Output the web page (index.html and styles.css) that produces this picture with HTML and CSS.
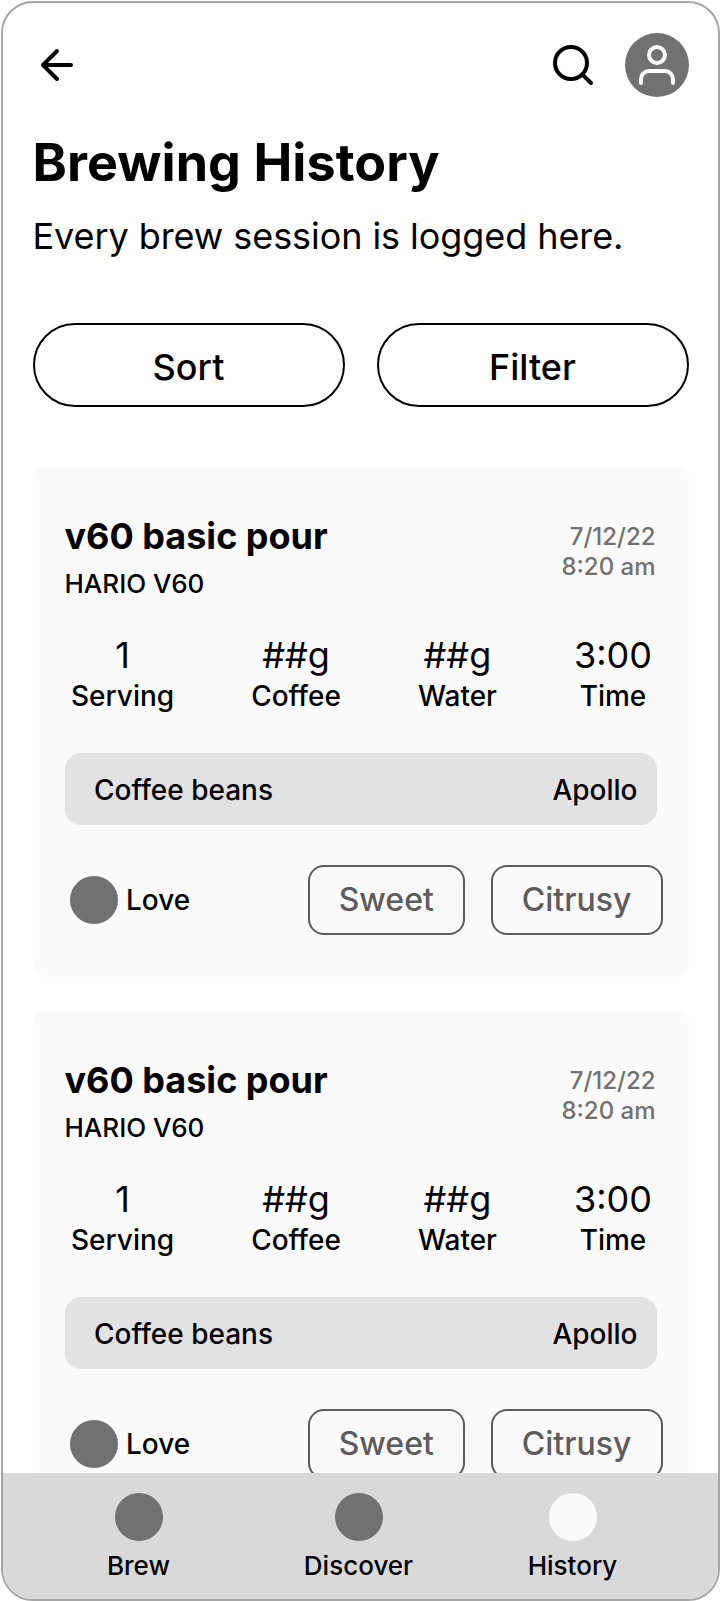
FILE: index.html
```html
<!DOCTYPE html>
<html lang="en">
<head>
<meta charset="UTF-8">
<meta name="viewport" content="width=device-width, initial-scale=1.0">
<title>Brewing History</title>
<link rel="stylesheet" href="styles.css">
</head>
<body>

<div class="phone">
    <main class="content">
        <header class="top-bar">
            <svg class="icon" viewBox="0 0 24 24"><path d="M19 12H5M12 19l-7-7 7-7"/></svg>
            <div class="top-actions">
                <svg class="icon" viewBox="0 0 24 24"><circle cx="11" cy="11" r="8"/><path d="M21 21l-4.35-4.35"/></svg>
                <div class="avatar">
                    <svg class="icon" viewBox="0 0 24 24"><path d="M20 21v-2a4 4 0 0 0-4-4H8a4 4 0 0 0-4 4v2"/><circle cx="12" cy="7" r="4"/></svg>
                </div>
            </div>
        </header>

        <h1>Brewing History</h1>
        <p class="subtitle">Every brew session is logged here.</p>

        <div class="controls">
            <button class="control-button">Sort</button>
            <button class="control-button">Filter</button>
        </div>

        <div class="brew-list">
            <article class="card">
                <div class="card-header">
                    <div>
                        <h2>v60 basic pour</h2>
                        <p class="brewer">HARIO V60</p>
                    </div>
                    <p class="date">7/12/22<br>8:20 am</p>
                </div>
                <div class="stats">
                    <div class="stat"><span class="value">1</span><span class="label">Serving</span></div>
                    <div class="stat"><span class="value">##g</span><span class="label">Coffee</span></div>
                    <div class="stat"><span class="value">##g</span><span class="label">Water</span></div>
                    <div class="stat"><span class="value">3:00</span><span class="label">Time</span></div>
                </div>
                <div class="beans"><span>Coffee beans</span><span>Apollo</span></div>
                <div class="card-footer">
                    <div class="rating"><span class="dot"></span><span>Love</span></div>
                    <div class="tags">
                        <span class="tag">Sweet</span>
                        <span class="tag">Citrusy</span>
                    </div>
                </div>
            </article>

            <article class="card">
                <div class="card-header">
                    <div>
                        <h2>v60 basic pour</h2>
                        <p class="brewer">HARIO V60</p>
                    </div>
                    <p class="date">7/12/22<br>8:20 am</p>
                </div>
                <div class="stats">
                    <div class="stat"><span class="value">1</span><span class="label">Serving</span></div>
                    <div class="stat"><span class="value">##g</span><span class="label">Coffee</span></div>
                    <div class="stat"><span class="value">##g</span><span class="label">Water</span></div>
                    <div class="stat"><span class="value">3:00</span><span class="label">Time</span></div>
                </div>
                <div class="beans"><span>Coffee beans</span><span>Apollo</span></div>
                <div class="card-footer">
                    <div class="rating"><span class="dot"></span><span>Love</span></div>
                    <div class="tags">
                        <span class="tag">Sweet</span>
                        <span class="tag">Citrusy</span>
                    </div>
                </div>
            </article>
        </div>
    </main>

    <nav class="bottom-nav">
        <div class="nav-item"><span class="dot"></span><span>Brew</span></div>
        <div class="nav-item"><span class="dot"></span><span>Discover</span></div>
        <div class="nav-item active"><span class="dot"></span><span>History</span></div>
    </nav>
</div>

</body>
</html>
```
FILE: styles.css
```css
* {
    box-sizing: border-box;
}

body {
    margin: 0;
    padding: 1px 0 0 1px;
    height: 1601px;
    overflow: hidden;
    background: #fff;
    color: #000;
    font-family: Inter, sans-serif;
}

h1, h2, p {
    margin: 0;
}

.phone {
    display: flex;
    flex-direction: column;
    width: 719px;
    height: 1599.5px;
    border: 2px solid #a6a6a6;
    border-radius: 32px;
    overflow: hidden;
}

.content {
    flex: 1;
    min-height: 0;
    overflow: hidden;
    padding: 30px 29.5px 0;
}

.top-bar, .top-actions, .card-header, .card-footer, .rating {
    display: flex;
    align-items: center;
}

.top-bar, .card-header, .card-footer {
    justify-content: space-between;
}

.top-bar {
    height: 64px;
}

.top-actions {
    gap: 28px;
}

.icon {
    display: block;
    width: 48px;
    height: 48px;
    fill: none;
    stroke: currentColor;
    stroke-width: 2;
    stroke-linecap: round;
    stroke-linejoin: round;
}

.avatar {
    display: flex;
    align-items: center;
    justify-content: center;
    width: 64px;
    height: 64px;
    border-radius: 50%;
    background: #717171;
    color: #fff;
}

h1 {
    margin-top: 34px;
    font-size: 52px;
    font-weight: 700;
    line-height: 64px;
    letter-spacing: 0.06px;
}

.subtitle {
    margin-top: 19px;
    font-size: 36px;
    line-height: 44px;
    letter-spacing: -0.07px;
}

.controls {
    display: flex;
    gap: 32px;
    margin-top: 65px;
}

.control-button {
    flex: 1;
    height: 84px;
    padding: 3px 0 0;
    border: 2px solid #000;
    border-radius: 42px;
    background: none;
    color: #000;
    font: 500 36px/44px Inter, sans-serif;
}

.brew-list {
    display: flex;
    flex-direction: column;
    gap: 32px;
    margin-top: 58px;
}

.card {
    height: 512px;
    padding: 49px 32px 0;
    border-radius: 16px;
    background: #fafafa;
}

.card-header {
    align-items: flex-start;
    height: 88px;
}

h2 {
    font-size: 36px;
    font-weight: 700;
    line-height: 44px;
}

.brewer {
    margin-top: 10px;
    font-size: 26px;
    font-weight: 500;
    line-height: 32px;
}

.date {
    margin: 8px 1px 0 0;
    color: #717171;
    font-size: 24px;
    font-weight: 500;
    line-height: 30px;
    text-align: right;
}

.stats {
    display: flex;
    justify-content: space-between;
    margin-top: 31px;
    padding: 0 4.5px 0 6.5px;
}

.stat, .nav-item {
    display: flex;
    flex-direction: column;
    align-items: center;
}

.value {
    font-size: 36px;
    line-height: 44px;
}

.label {
    margin-top: 2px;
    font-size: 28px;
    font-weight: 500;
    line-height: 34px;
}

.beans {
    display: flex;
    align-items: center;
    justify-content: space-between;
    height: 72px;
    margin-top: 40px;
    padding: 2px 19px 0 29.5px;
    border-radius: 16px;
    background: #e2e2e2;
    font-size: 28px;
    font-weight: 500;
}

.card-footer {
    margin: 40px -6px 0 5.5px;
}

.rating {
    gap: 8px;
    font-size: 28px;
    font-weight: 500;
}

.dot {
    width: 48px;
    height: 48px;
    border-radius: 50%;
    background: #717171;
}

.tags {
    display: flex;
    gap: 26px;
}

.tag {
    height: 70px;
    padding: 0 29px;
    border: 2px solid #5c5c5c;
    border-radius: 16px;
    color: #5c5c5c;
    font-size: 32px;
    font-weight: 500;
    line-height: 66px;
}

.bottom-nav {
    display: grid;
    grid-template-columns: 220px 220px 208px;
    height: 126px;
    padding: 20px 0 0 25.5px;
    background: #d9d9d9;
    font-size: 26px;
    font-weight: 500;
    line-height: 32px;
}

.nav-item {
    gap: 9px;
}

.active .dot {
    background: #fafafa;
}
```
